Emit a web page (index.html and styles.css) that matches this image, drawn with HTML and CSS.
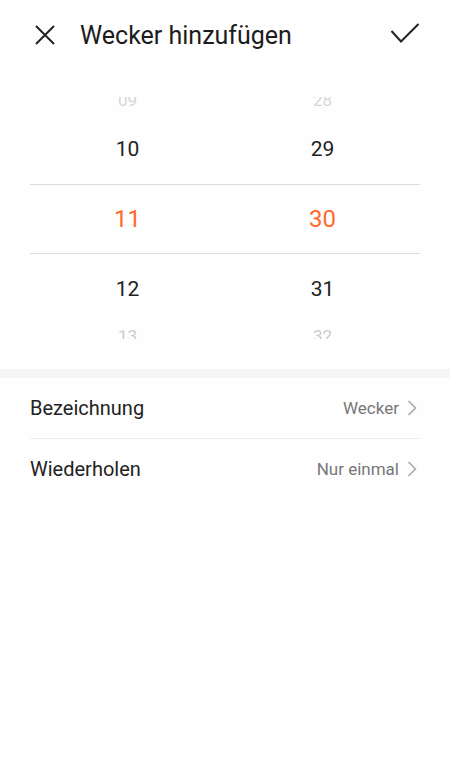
FILE: index.html
```html
<!DOCTYPE html>
<html lang="de">
<head>
	<meta charset="UTF-8">
	<title>Wecker hinzufügen</title>
	<link rel="stylesheet" href="styles.css">
</head>
<body>
	<div class="topbar">
		<svg class="icon" width="20" height="20" viewBox="0 0 20 20">
			<path d="M1 1 L19 19 M19 1 L1 19" stroke="#222" stroke-width="2" fill="none"/>
		</svg>
		<h1 class="title">Wecker hinzufügen</h1>
		<svg class="icon check" width="30" height="22" viewBox="0 0 30 22">
			<path d="M1.5 8 L11 18.5 L28.5 1" stroke="#222" stroke-width="2" fill="none"/>
		</svg>
	</div>

	<div class="picker">
		<div class="row fade-top"><span>09</span><span>28</span></div>
		<div class="row"><span>10</span><span>29</span></div>
		<div class="row current"><span>11</span><span>30</span></div>
		<div class="row"><span>12</span><span>31</span></div>
		<div class="row fade-bottom"><span>13</span><span>32</span></div>
	</div>

	<div class="band"></div>

	<ul class="settings">
		<li>
			<span class="label">Bezeichnung</span>
			<span class="value">Wecker</span>
			<svg class="arrow" width="10" height="16" viewBox="0 0 10 16">
				<path d="M1.5 1 L8.5 8 L1.5 15" stroke="#aaa" stroke-width="1.6" fill="none"/>
			</svg>
		</li>
		<li>
			<span class="label">Wiederholen</span>
			<span class="value">Nur einmal</span>
			<svg class="arrow" width="10" height="16" viewBox="0 0 10 16">
				<path d="M1.5 1 L8.5 8 L1.5 15" stroke="#aaa" stroke-width="1.6" fill="none"/>
			</svg>
		</li>
	</ul>
</body>
</html>
```

FILE: styles.css
```css
*{
	margin: 0;
	padding: 0;
}
body{
	background: #fefefe;
	font-family: Roboto, "Noto Sans", sans-serif;
	color: #222;
}
.topbar{
	height: 70px;
	display: flex;
	align-items: center;
	padding: 0 30px 0 35px;
}
.title{
	font-size: 25px;
	font-weight: 400;
	margin-left: 25px;
	color: #1c1c1c;
}
.check{
	margin-left: auto;
	margin-top: -2px;
}
.picker{
	margin: 27px 30px 0;
	padding-bottom: 26px;
}
.row{
	display: grid;
	grid-template-columns: 1fr 1fr;
	text-align: center;
	height: 70px;
	line-height: 70px;
	font-size: 21px;
	color: #222;
}
.current{
	border-top: 1px solid #dcdcdc;
	border-bottom: 1px solid #dcdcdc;
	height: 68px;
	line-height: 68px;
	font-size: 24px;
	color: #ff6a2b;
}
/* rows at the wheel's edges are cut by the picker window */
.fade-top,
.fade-bottom{
	overflow: hidden;
	font-size: 17px;
	color: #cccccc;
}
.fade-top{
	height: 17px;
	line-height: 6px;
	color: #d6d6d6;
}
.fade-bottom{
	height: 15px;
	margin-bottom: 4px;
	line-height: 24px;
}
.band{
	height: 9px;
	background: #f5f5f5;
}
.settings{
	list-style: none;
	margin: 0 30px;
}
.settings li{
	display: flex;
	align-items: center;
	height: 60px;
	border-bottom: 1px solid #eeeeee;
}
.settings li:last-child{
	border-bottom: none;
}
.label{
	font-size: 20px;
	color: #222;
}
.value{
	margin-left: auto;
	font-size: 17px;
	color: #777;
}
.arrow{
	margin: 0 3px 0 8px;
}
```
